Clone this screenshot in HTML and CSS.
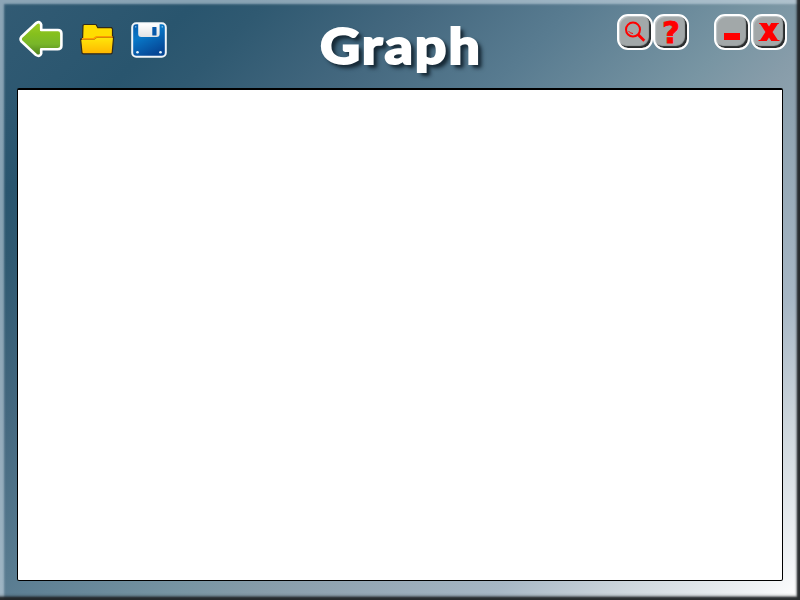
FILE: index.html
```html
<!DOCTYPE html>
<html lang="en">
<head>
<meta charset="utf-8">
<title>Graph</title>
<link rel="stylesheet" href="styles.css">
</head>
<body>
<div class="window">
  <header class="toolbar">
    <nav class="tools">
      <button class="tool" aria-label="Back">
        <svg width="46" height="40" viewBox="0 0 46 40">
          <defs><linearGradient id="green" x2="0" y2="1"><stop offset="0" stop-color="#a0cd27"/><stop offset=".35" stop-color="#85c01d"/><stop offset=".65" stop-color="#78b62a"/><stop offset="1" stop-color="#4d7d1c"/></linearGradient></defs>
          <path d="M17.5 2.8 2.3 17Q.8 19.1 2.3 21.2L17 35Q20.8 37.3 22.2 33.6V29.3H38.5Q42.4 29.3 42.4 25.8V13.5Q42.4 10 39 10H22.2V4.6Q21 .8 17.5 2.8Z" fill="url(#green)" stroke="#fff" stroke-width="2.6" stroke-linejoin="round"/>
        </svg>
      </button>
      <button class="tool" aria-label="Open">
        <svg width="36" height="34" viewBox="0 0 36 34">
          <defs><linearGradient id="yellow" x2="0" y2="1"><stop offset="0" stop-color="#ffe80a"/><stop offset="1" stop-color="#ffb600"/></linearGradient></defs>
          <path d="M3.5 19 4 3.2 5 2.5H17L18.8 5.7H32.5L33.5 7V20Z" fill="#ffdc00" stroke="#30291b" stroke-width="1.2"/>
          <path d="M1.6 17.2H14.8L17.5 15.2H34.6L33.2 31 32.1 31.8H4.2L3 31Z" fill="url(#yellow)" stroke="#30291b" stroke-width="1.2"/>
          <path d="M3 16.8H14.8L17.5 14.8H33.5" fill="none" stroke="#ff9c00" stroke-width="1.8"/>
        </svg>
      </button>
      <button class="tool" aria-label="Save">
        <svg width="36" height="36" viewBox="0 0 36 36">
          <defs>
            <linearGradient id="blue" x1="0" y1="0" x2=".5" y2="1"><stop offset="0" stop-color="#0758a8"/><stop offset=".42" stop-color="#0878c8"/><stop offset="1" stop-color="#064796"/></linearGradient>
            <linearGradient id="metal" x2="0" y2="1"><stop offset="0" stop-color="#fff"/><stop offset="1" stop-color="#e1e2e4"/></linearGradient>
          </defs>
          <rect x="1.2" y="1.2" width="33.6" height="33.6" rx="4" fill="url(#blue)" stroke="#f1f5f8" stroke-width="2"/>
          <path d="M7.2 1.5H28.6V12Q28.6 15 25.6 15H10.2Q7.2 15 7.2 12Z" fill="url(#metal)"/>
          <rect x="21.3" y="5" width="4.2" height="8.6" rx=".6" fill="#0758aa"/>
          <g fill="#e9f5fc"><circle cx="6.5" cy="30.3" r="1.3"/><circle cx="29.5" cy="30.3" r="1.3"/><circle cx="4.8" cy="4.8" r=".6"/><circle cx="31.2" cy="4.8" r=".6"/></g>
        </svg>
      </button>
    </nav>
    <h1 class="title">Graph</h1>
    <div class="controls">
      <button class="control" aria-label="Search">
        <svg width="22" height="22" viewBox="0 0 22 22"><circle cx="9" cy="8.6" r="7" fill="none" stroke="red" stroke-width="2"/><path d="M14 13.5 20.3 19.8" stroke="red" stroke-width="2.8"/><path d="M4.5 10Q5.8 12.4 9 12.5" fill="none" stroke="red" stroke-width="1"/></svg>
      </button>
      <button class="control help">?</button>
      <button class="control minimize" aria-label="Minimize"><span class="bar"></span></button>
      <button class="control" aria-label="Close">
        <svg width="22" height="18" viewBox="0 0 22 18"><path d="M3.8-2 18.2 20M18.2-2 3.8 20" stroke="red" stroke-width="6"/><path d="M1.2.5H9M13 .5H20.8M.5 17.5H8.3M13.2 17.5H21.5" stroke="red" stroke-width="1"/></svg>
      </button>
    </div>
  </header>
  <main class="canvas"></main>
</div>
</body>
</html>
```
FILE: styles.css
```css
* { box-sizing: border-box; }
body { margin: 0; }
.window {
  display: flex;
  flex-direction: column;
  width: 800px;
  height: 600px;
  padding: 0 17px 19px;
  overflow: hidden;
  background: linear-gradient(135deg, #325b74 0, #29556e 140px, #2f5971 190px, #44687f 300px, #587b90 410px, #7895a3 545px, #889daa 605px, #a7b7c5 770px, #ced7dd 860px, #f3f5f7 960px, #fff 990px);
  box-shadow:
    inset -4px -4px 2px -1px rgba(32, 36, 38, .9),
    inset -5px -6px 3px -2px rgba(32, 36, 38, .5),
    inset 5px 5px 2px -1px rgba(220, 232, 240, .42),
    inset 6px 6px 3px -2px rgba(220, 232, 240, .2);
}
.toolbar {
  display: grid;
  grid-template-columns: 260px 1fr 260px;
  height: 88px;
  flex: none;
}
.tools { display: flex; align-items: flex-start; gap: 15px; padding: 20px 0 0 2px; }
.tool { display: block; padding: 0; border: 0; background: none; }
.tool svg { display: block; }
.tool:nth-child(2) { margin: 2px 1px 0 -1px; }
.tool:nth-child(3) { margin: 2px 0 0; }
.title {
  margin: 16px -2px 0 0;
  text-align: center;
  font: 900 50px/58px Lato, sans-serif;
  letter-spacing: 1.8px;
  white-space: nowrap;
  color: #fff;
  -webkit-text-stroke: 1.8px #fff;
  text-shadow: 3px 3px 3px #172a37, 4px 4px 4px rgba(20, 35, 46, .7);
  transform: scaleX(1.11);
}
.controls { display: flex; gap: 1px; padding: 14px 0 0 94px; margin-right: -6px; }
.control {
  display: flex;
  align-items: center;
  justify-content: center;
  flex: none;
  width: 36px;
  height: 36px;
  padding: 0;
  border: 2px solid #fff;
  border-radius: 11px;
  background: #a2a8a9;
  box-shadow: inset -2px -2px 1px #292c2d, inset 1px 1px 1px #c2c8ca;
  color: red;
}
.help { margin-left: -1px; font: bold 31px/32px "DejaVu Sans", sans-serif; -webkit-text-stroke: .8px red; }
.minimize { margin-left: 24px; align-items: flex-end; padding: 0 0 8px; }
.bar { width: 16px; height: 7px; background: red; }
.canvas {
  flex: 1;
  border: 1px solid #000;
  border-top-width: 2px;
  border-radius: 2px;
  background: #fff;
}
```
